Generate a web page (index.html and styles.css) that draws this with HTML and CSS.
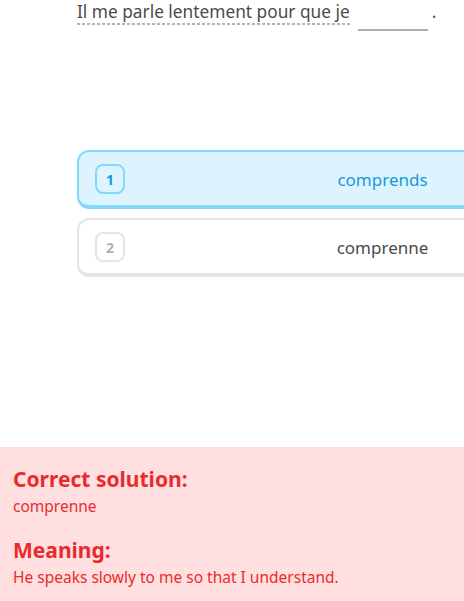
FILE: index.html
```html
<!DOCTYPE html>
<html lang="fr">
<head>
<meta charset="utf-8">
<link rel="stylesheet" href="styles.css">
</head>
<body>
<div class="page">
  <div class="exercise">
    <p class="sentence"><span class="hint">Il me parle lentement pour que je</span><span class="blank"></span><span class="stop">.</span></p>
    <div class="choices">
      <div class="choice selected">
        <span class="badge">1</span>
        <span class="label">comprends</span>
        <span class="spacer"></span>
      </div>
      <div class="choice">
        <span class="badge">2</span>
        <span class="label">comprenne</span>
        <span class="spacer"></span>
      </div>
    </div>
  </div>
  <div class="feedback">
    <h2 class="fb-title">Correct solution:</h2>
    <p class="fb-text">comprenne</p>
    <h2 class="fb-title second">Meaning:</h2>
    <p class="fb-text">He speaks slowly to me so that I understand.</p>
  </div>
</div>
</body>
</html>
```
FILE: styles.css
```css
html, body {
  margin: 0;
  padding: 0;
  overflow: hidden;
  background: #fff;
}
body {
  font-family: "Noto Sans", "DejaVu Sans", sans-serif;
  color: #4b4b4b;
}
.page {
  display: flex;
  flex-direction: column;
  height: 100vh;
  width: 464px;
}
.exercise {
  padding-left: 77px;
  overflow: hidden;
}
.sentence {
  margin: 0;
  font-size: 17.3px;
  line-height: 24px;
  white-space: nowrap;
  display: flex;
  align-items: flex-start;
}
.hint {
  display: inline-block;
  padding-bottom: 1px;
  background-image: repeating-linear-gradient(to right, #b4b4b4 0 3px, transparent 3px 5px);
  background-size: 100% 2px;
  background-repeat: no-repeat;
  background-position: left bottom;
}
.blank {
  display: inline-block;
  width: 70px;
  height: 29px;
  border-bottom: 2px solid #afafaf;
  margin-left: 8px;
}
.stop {
  margin-left: 4px;
}
.choices {
  margin-top: 119px;
  display: flex;
  flex-direction: column;
  gap: 9px;
  width: 611px;
  padding-bottom: 2px;
}
.choice {
  display: grid;
  grid-template-columns: 30px 1fr 30px;
  align-items: center;
  padding: 12px 16px 11px;
  border: 2px solid #e5e5e5;
  border-bottom-width: 4px;
  border-radius: 12px;
  background: #fff;
  color: #4b4b4b;
}
.choice.selected {
  border-color: #84d8ff;
  background: #ddf4ff;
  color: #1899d6;
}
.badge {
  box-sizing: border-box;
  width: 30px;
  height: 30px;
  border: 2px solid #e5e5e5;
  border-radius: 8px;
  display: flex;
  align-items: center;
  justify-content: center;
  font-size: 14px;
  font-weight: 700;
  color: #afafaf;
}
.selected .badge {
  border-color: #84d8ff;
  color: #1899d6;
}
.label {
  text-align: center;
  font-size: 17px;
}
.feedback {
  margin-top: auto;
  height: 154px;
  box-sizing: border-box;
  background: #ffdfe0;
  color: #ea2b2b;
  padding: 18px 13px 0;
}
.fb-title {
  margin: 0;
  font-size: 21px;
  font-weight: 700;
  line-height: 28px;
}
.fb-title.second {
  margin-top: 16px;
}
.fb-text {
  margin: 0;
  font-size: 15.5px;
  line-height: 27px;
}
```
